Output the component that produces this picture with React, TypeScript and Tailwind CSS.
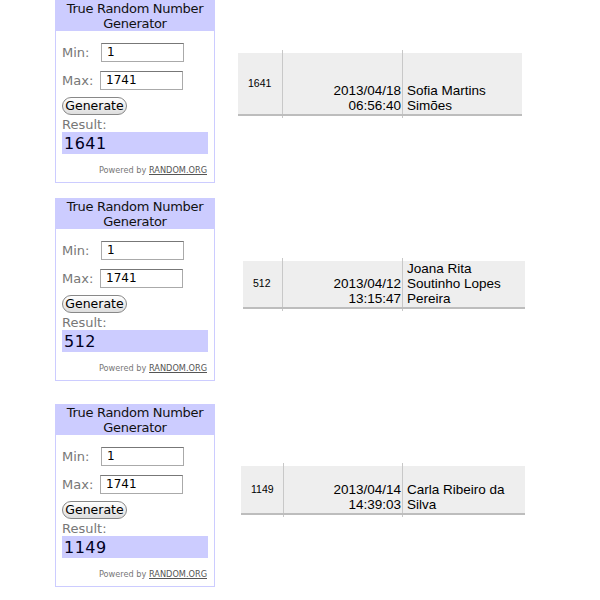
import React from 'react';

type Draw = {
  result: string;
  id: string;
  date: string;
  time: string;
  name: string[];
  rowClass: string;
  tableClass: string;
  cellHeight: string;
  col1: string;
  col2: string;
};

const draws: Draw[] = [
  {
    result: '1641',
    id: '1641',
    date: '2013/04/18',
    time: '06:56:40',
    name: ['Sofia Martins', 'Simões'],
    rowClass: 'h-[198px]',
    tableClass: 'ml-[23px] mt-[50px] w-[284px]',
    cellHeight: 'h-[61px]',
    col1: 'w-[45px]',
    col2: 'w-[120px]',
  },
  {
    result: '512',
    id: '512',
    date: '2013/04/12',
    time: '13:15:47',
    name: ['Joana Rita', 'Soutinho Lopes', 'Pereira'],
    rowClass: 'h-[206px]',
    tableClass: 'ml-[28px] mt-[60px] w-[282px]',
    cellHeight: 'h-[46px]',
    col1: 'w-[40px]',
    col2: 'w-[120px]',
  },
  {
    result: '1149',
    id: '1149',
    date: '2013/04/14',
    time: '14:39:03',
    name: ['Carla Ribeiro da', 'Silva'],
    rowClass: 'h-[196px]',
    tableClass: 'ml-[26px] mt-[59px] w-[284px]',
    cellHeight: 'h-[47px]',
    col1: 'w-[43px]',
    col2: 'w-[119px]',
  },
];

const Widget = ({ result }: { result: string }) => (
  <div className="w-[160px] h-[183px] border border-[#ccccff] bg-white flex flex-col font-['DejaVu_Sans',sans-serif]">
    {/* header */}
    <div className="bg-[#ccccff] h-[30px] text-center text-[13px] leading-[15px] text-[#111] tracking-[-0.3px]">
      True Random Number
      <br />
      Generator
    </div>

    <div className="px-[6px] flex flex-col">
      <div className="flex items-center mt-[12px] h-[19px]">
        <span className="w-[39px] text-[13px] text-[#777]">Min:</span>
        <div className="w-[83px] h-[19px] border border-[#aaa] border-t-[#777] text-[12px] leading-[17px] pl-[5px] text-black">
          1
        </div>
      </div>
      <div className="flex items-center mt-[9px] h-[19px]">
        <span className="w-[38px] text-[13px] text-[#777]">Max:</span>
        <div className="w-[83px] h-[19px] border border-[#aaa] border-t-[#777] text-[12px] leading-[17px] pl-[5px] text-black">
          1741
        </div>
      </div>
      <div className="mt-[7px] w-[65px] h-[18px] rounded-full border border-[#888] bg-gradient-to-b from-white to-[#dedede] text-[12.5px] leading-[16px] text-center text-black">
        Generate
      </div>
      <div className="mt-[2px] text-[13px] leading-[15px] text-[#777]">Result:</div>
      <div className="h-[22px] bg-[#ccccff] text-[16px] leading-[23px] pl-[2px] text-[#000022] tracking-[0.5px]">
        {result}
      </div>
      <div className="mt-[11px] text-right text-[8.2px] leading-[11px] text-[#777] pr-px">
        Powered by <span className="underline text-[#555]">RANDOM.ORG</span>
      </div>
    </div>
  </div>
);

const Entry = ({ d }: { d: Draw }) => (
  <div className={`${d.tableClass} flex flex-col font-['Liberation_Sans',Arial,sans-serif] text-black`}>
    <div className="flex h-[3px]">
      <div className={`${d.col1} border-r border-[#c8c8c8]`} />
      <div className={`${d.col2} border-r border-[#c8c8c8]`} />
      <div className="flex-1" />
    </div>
    <div className={`flex ${d.cellHeight} bg-[#eeeeee]`}>
      <div className={`${d.col1} border-r border-[#c8c8c8] flex items-center pl-[10px] text-[10.5px]`}>
        {d.id}
      </div>
      <div className={`${d.col2} border-r border-[#c8c8c8] flex flex-col justify-end items-end pr-px text-[13.5px] leading-[15px] pb-px`}>
        <span>{d.date}</span>
        <span>{d.time}</span>
      </div>
      <div className="flex-1 flex flex-col justify-end pl-[4px] text-[13.5px] leading-[15px] pb-px">
        {d.name.map((n) => (
          <span key={n}>{n}</span>
        ))}
      </div>
    </div>
    <div className="h-[2px] bg-[#bdbdbd]" />
    <div className="flex h-[2px]">
      <div className={`${d.col1} border-r border-[#c8c8c8]`} />
      <div className={`${d.col2} border-r border-[#c8c8c8]`} />
      <div className="flex-1" />
    </div>
  </div>
);

export default function App() {
  return (
    <div className="w-[600px] h-[600px] bg-white overflow-hidden pl-[55px]">
      {draws.map((d) => (
        <div key={d.id} className={`flex items-start ${d.rowClass}`}>
          <Widget result={d.result} />
          <Entry d={d} />
        </div>
      ))}
    </div>
  );
}
